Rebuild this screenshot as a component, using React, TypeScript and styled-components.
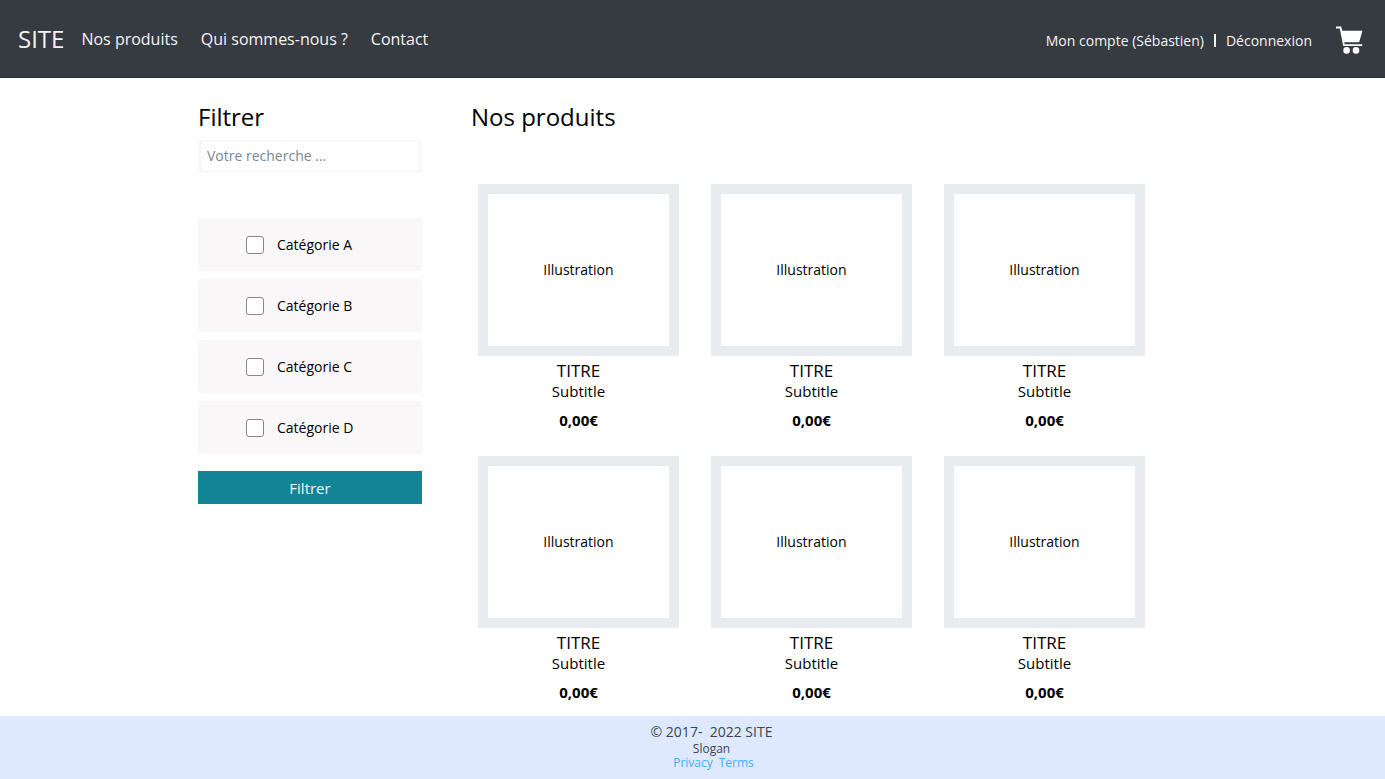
import React from "react";
import styled, { createGlobalStyle } from "styled-components";

const GlobalStyle = createGlobalStyle`
  *, *::before, *::after { box-sizing: border-box; }
  body {
    margin: 0;
    background: #fff;
    color: #000;
    font-family: "Open Sans", "Noto Sans", sans-serif;
  }
  a { color: inherit; text-decoration: none; }
  button, input { font: inherit; }
`;

const Page = styled.div`
  display: flex;
  flex-direction: column;
  min-height: 100vh;
`;

const Header = styled.header`
  display: flex;
  align-items: center;
  justify-content: space-between;
  height: 78px;
  padding: 0 22px 0 18px;
  background: #363a41;
  border-bottom: 1px solid #2f3338;
  color: #f4f4f5;
`;

const HeaderLeft = styled.div`
  display: flex;
  align-items: center;
  gap: 17px;
`;

const Nav = styled.nav`
  display: flex;
  gap: 23px;
  font-size: 16px;
  line-height: 24px;
`;

const Brand = styled.a`
  font-size: 24px;
  line-height: 34px;
`;

const Account = styled.div`
  display: flex;
  align-items: center;
  font-size: 14px;
  line-height: 20px;
  padding-top: 4px;
`;

const Separator = styled.span`
  width: 2px;
  height: 13px;
  margin: 0 10px;
  background: #f4f4f5;
`;

const CartLink = styled.a`
  display: flex;
  margin-left: 24px;
`;

const Main = styled.main`
  flex: 1;
  display: grid;
  grid-template-columns: 224px minmax(0, 1fr);
  gap: 49px;
  padding: 22px 240px 13px 198px;
`;

const Heading = styled.h2`
  margin: 0;
  font-size: 24px;
  font-weight: 400;
  line-height: 34px;
`;

const Filters = styled.form`
  display: flex;
  flex-direction: column;
`;

const Search = styled.input`
  width: 100%;
  height: 33px;
  margin: 6px 0 45px;
  padding: 0 5px 1px;
  border: solid #f9f9f9;
  border-width: 2px 4px 3px;
  background: #fff;
  font-size: 14px;
  &::placeholder { color: #7b8794; opacity: 1; }
`;

const Categories = styled.div`
  display: flex;
  flex-direction: column;
  gap: 8px;
`;

const Category = styled.label`
  display: flex;
  align-items: center;
  gap: 13px;
  height: 53px;
  padding-left: 48px;
  background: #f9f7f8;
  font-size: 14px;
  line-height: 20px;
`;

const Checkbox = styled.input`
  appearance: none;
  width: 18px;
  height: 18px;
  margin: 0;
  border: 1px solid #86868b;
  border-radius: 3px;
  background: #fff;
  &:checked { background: #138496; }
`;

const Submit = styled.button`
  height: 33px;
  margin-top: 17px;
  padding: 0;
  border: 0;
  background: #138496;
  color: #f4f4f5;
  font-size: 15px;
  line-height: 20px;
`;

const Products = styled.div`
  display: grid;
  grid-template-columns: repeat(3, minmax(0, 1fr));
  gap: 25px 32px;
  padding: 50px 0 0 7px;
`;

const Card = styled.article`
  text-align: center;
`;

const Illustration = styled.div`
  display: flex;
  align-items: center;
  justify-content: center;
  height: 172px;
  border: 10px solid #e8ecef;
  font-size: 14px;
  line-height: 20px;
`;

const Title = styled.h3`
  margin: 4px 0 0;
  font-size: 17px;
  font-weight: 400;
  line-height: 22px;
`;

const Subtitle = styled.p`
  margin: 0;
  font-size: 15px;
  line-height: 18px;
`;

const Price = styled.p`
  margin: 10px 0 1px;
  font-size: 15px;
  font-weight: 700;
  line-height: 20px;
`;

const Footer = styled.footer`
  padding: 6px 0 9px 38px;
  background: #dee9ff;
  color: #3f444b;
  text-align: center;
`;

const Copyright = styled.p`
  margin: 0;
  font-size: 14px;
  line-height: 20px;
`;

const FooterLine = styled.p`
  margin: 0;
  font-size: 12px;
  line-height: 14px;
`;

const FooterLinks = styled.div`
  display: flex;
  justify-content: center;
  gap: 6px;
  padding-left: 4px;
  color: #40b0f5;
  font-size: 12px;
  line-height: 14px;
`;

const CartIcon = () => (
  <svg width="27" height="29" viewBox="0 0 27 29" fill="#fff" aria-hidden="true">
    <path d="M0 .6h5.2l1 4.2H26.4L23.4 15.4Q23.1 16.2 22.3 16.2H8.2l.5 2h17.5v1.8H7.2L3.8 2.5H0z" />
    <circle cx="10.6" cy="24.4" r="3.3" />
    <circle cx="20" cy="24.4" r="3.3" />
  </svg>
);

const categories = ["A", "B", "C", "D"];
const products = [1, 2, 3, 4, 5, 6];

export default function App() {
  return (
    <Page>
      <GlobalStyle />
      <Header>
        <HeaderLeft>
          <Brand href="#">SITE</Brand>
          <Nav>
            <a href="#produits">Nos produits</a>
            <a href="#apropos">Qui sommes-nous ?</a>
            <a href="#contact">Contact</a>
          </Nav>
        </HeaderLeft>
        <Account>
          <a href="#compte">Mon compte (Sébastien)</a>
          <Separator />
          <a href="#deconnexion">Déconnexion</a>
          <CartLink href="#panier" aria-label="Panier">
            <CartIcon />
          </CartLink>
        </Account>
      </Header>
      <Main>
        <Filters onSubmit={(e) => e.preventDefault()}>
          <Heading>Filtrer</Heading>
          <Search type="text" aria-label="Votre recherche" placeholder="Votre recherche ..." />
          <Categories>
            {categories.map((name) => (
              <Category key={name}>
                <Checkbox type="checkbox" />
                Catégorie {name}
              </Category>
            ))}
          </Categories>
          <Submit type="submit">Filtrer</Submit>
        </Filters>
        <section id="produits">
          <Heading>Nos produits</Heading>
          <Products>
            {products.map((id) => (
              <Card key={id}>
                <Illustration>Illustration</Illustration>
                <Title>TITRE</Title>
                <Subtitle>Subtitle</Subtitle>
                <Price>0,00€</Price>
              </Card>
            ))}
          </Products>
        </section>
      </Main>
      <Footer>
        <Copyright>© 2017-{"\u00a0 "}2022 SITE</Copyright>
        <FooterLine>Slogan</FooterLine>
        <FooterLinks>
          <a href="#privacy">Privacy</a>
          <a href="#terms">Terms</a>
        </FooterLinks>
      </Footer>
    </Page>
  );
}
